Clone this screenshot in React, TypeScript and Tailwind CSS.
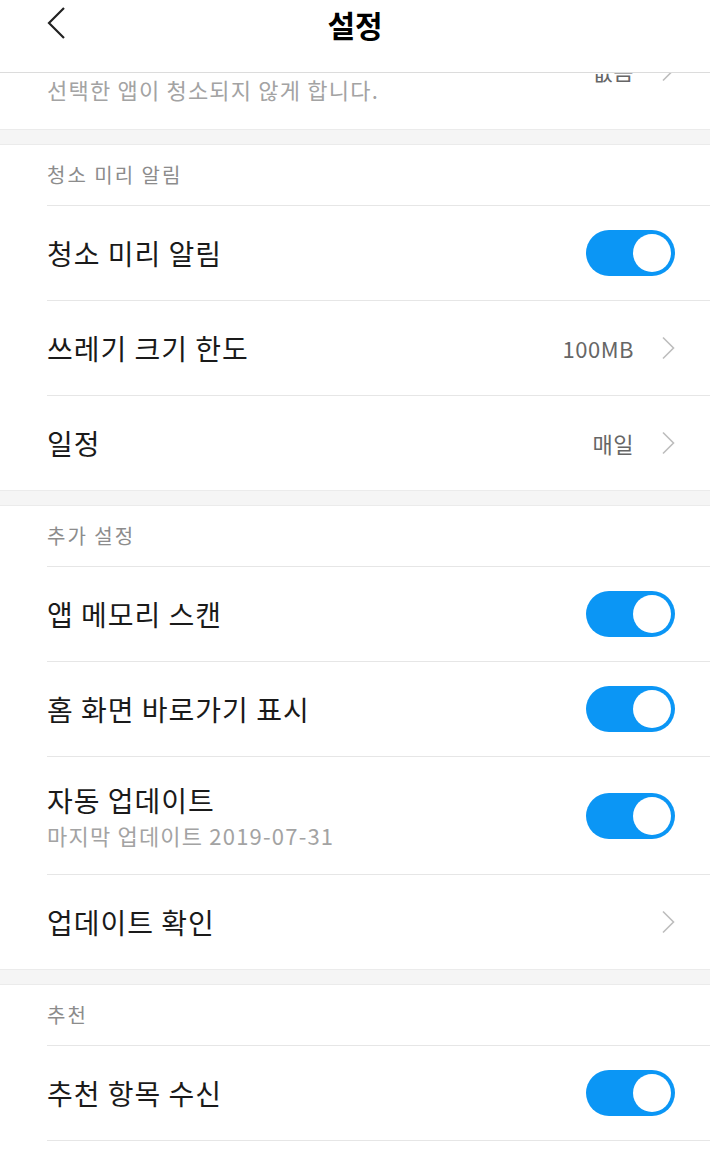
import React from 'react';

const FONT = { fontFamily: '"Noto Sans CJK KR", "Noto Sans", Roboto, sans-serif' };

const Chevron: React.FC = () => (
    <svg width="14" height="24" viewBox="0 0 14 24" className="flex-shrink-0">
        <path d="M2 1.5 L12.5 12 L2 22.5" fill="none" stroke="#bdbdbd" strokeWidth="1.6" />
    </svg>
);

const Toggle: React.FC = () => (
    <div className="w-[89px] h-[46px] rounded-full bg-[#0b96f5] flex items-center justify-end pr-[4px] flex-shrink-0">
        <div className="w-[38px] h-[38px] rounded-full bg-white"></div>
    </div>
);

const Gap: React.FC = () => (
    <div className="h-[16px] bg-[#f5f5f5] border-y border-[#ebebeb]"></div>
);

const SectionTitle: React.FC<{ title: string }> = ({ title }) => (
    <div className="h-[61px] pl-[47px] flex items-center">
        <div className="flex-grow h-full flex items-center border-b border-[#e6e6e6] text-[20px] tracking-[2px] text-[#8c8c8c]">
            {title}
        </div>
    </div>
);

const Row: React.FC<{
    title: string;
    sub?: string;
    value?: string;
    kind: 'toggle' | 'link';
    last?: boolean;
}> = ({ title, sub, value, kind, last = false }) => {
    const height = sub ? 'h-[118px]' : last ? 'h-[94px]' : 'h-[95px]';
    return (
        <div className="pl-[47px]">
            <div className={`flex items-center justify-between pr-[35px] ${height} ${last ? '' : 'border-b border-[#e6e6e6]'}`}>
                <div className="flex flex-col">
                    <span className="text-[28px] tracking-[1px] text-[#1a1a1a] leading-[38px]">{title}</span>
                    {sub && <span className="text-[22px] tracking-[1.2px] text-[#a3a3a3] leading-[32px]">{sub}</span>}
                </div>
                {kind === 'toggle' ? (
                    <Toggle />
                ) : (
                    <div className="flex items-center gap-[27px]">
                        {value && <span className="text-[22px] tracking-[0.5px] text-[#666]">{value}</span>}
                        <Chevron />
                    </div>
                )}
            </div>
        </div>
    );
};

export default function App() {
    return (
        <div className="w-[710px] h-[1160px] bg-white flex flex-col overflow-hidden" style={FONT}>
            <div className="h-[73px] flex-shrink-0 flex items-center justify-center relative border-b border-[#dcdcdc]">
                <svg width="24" height="34" viewBox="0 0 24 34" className="absolute left-[45px] top-[6px]">
                    <path d="M19 2 L4 17 L19 32" fill="none" stroke="#222" strokeWidth="2.2" />
                </svg>
                <span className="text-[30px] font-bold text-black -mt-[24px]">설정</span>
            </div>
            <div className="flex-grow overflow-hidden">
                <div className="-mt-[62px]">
                    <Row title="예외 목록" sub="선택한 앱이 청소되지 않게 합니다." value="없음" kind="link" last />
                    <Gap />
                    <SectionTitle title="청소 미리 알림" />
                    <Row title="청소 미리 알림" kind="toggle" />
                    <Row title="쓰레기 크기 한도" value="100MB" kind="link" />
                    <Row title="일정" value="매일" kind="link" last />
                    <Gap />
                    <SectionTitle title="추가 설정" />
                    <Row title="앱 메모리 스캔" kind="toggle" />
                    <Row title="홈 화면 바로가기 표시" kind="toggle" />
                    <Row title="자동 업데이트" sub="마지막 업데이트 2019-07-31" kind="toggle" />
                    <Row title="업데이트 확인" kind="link" last />
                    <Gap />
                    <SectionTitle title="추천" />
                    <Row title="추천 항목 수신" kind="toggle" />
                </div>
            </div>
        </div>
    );
}
